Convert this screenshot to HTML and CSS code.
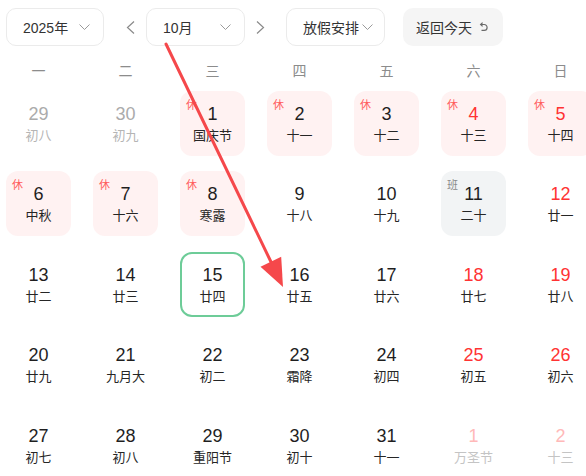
FILE: index.html
```html
<!DOCTYPE html>
<html lang="zh-CN">
<head>
<meta charset="utf-8">
<title>日历</title>
<link rel="stylesheet" href="styles.css">
</head>
<body>
<div class="page">
  <div class="toolbar">
    <div class="select sel-year"><span>2025年</span>
      <svg class="chev" width="11" height="6" viewBox="0 0 11 6"><polyline points="0.5,0.5 5.5,5.5 10.5,0.5"/></svg>
    </div>
    <button class="nav nav-prev" type="button">
      <svg width="9" height="13" viewBox="0 0 9 13"><polyline points="8,0.5 1.5,6.5 8,12.5"/></svg>
    </button>
    <div class="select sel-month"><span>10月</span>
      <svg class="chev" width="11" height="6" viewBox="0 0 11 6"><polyline points="0.5,0.5 5.5,5.5 10.5,0.5"/></svg>
    </div>
    <button class="nav nav-next" type="button">
      <svg width="9" height="13" viewBox="0 0 9 13"><polyline points="1,0.5 7.5,6.5 1,12.5"/></svg>
    </button>
    <div class="select sel-holiday"><span>放假安排</span>
      <svg class="chev" width="11" height="6" viewBox="0 0 11 6"><polyline points="0.5,0.5 5.5,5.5 10.5,0.5"/></svg>
    </div>
    <button class="today-btn" type="button"><span>返回今天</span>
      <svg class="undo" width="10" height="10" viewBox="0 0 10 10"><path d="M3 2.5 H6.2 A2.9 2.9 0 0 1 6.2 8.3 H3.5"/><polyline points="4.6,0.6 2.6,2.5 4.6,4.4"/></svg>
    </button>
  </div>

  <div class="grid">
    <div class="wd">一</div><div class="wd">二</div><div class="wd">三</div><div class="wd">四</div><div class="wd">五</div><div class="wd">六</div><div class="wd">日</div>

    <div class="cell other"><div class="num">29</div><div class="lunar">初八</div></div>
    <div class="cell other"><div class="num">30</div><div class="lunar">初九</div></div>
    <div class="cell rest"><span class="tag">休</span><div class="num">1</div><div class="lunar">国庆节</div></div>
    <div class="cell rest"><span class="tag">休</span><div class="num">2</div><div class="lunar">十一</div></div>
    <div class="cell rest"><span class="tag">休</span><div class="num">3</div><div class="lunar">十二</div></div>
    <div class="cell rest weekend"><span class="tag">休</span><div class="num">4</div><div class="lunar">十三</div></div>
    <div class="cell rest weekend"><span class="tag">休</span><div class="num">5</div><div class="lunar">十四</div></div>

    <div class="cell rest"><span class="tag">休</span><div class="num">6</div><div class="lunar">中秋</div></div>
    <div class="cell rest"><span class="tag">休</span><div class="num">7</div><div class="lunar">十六</div></div>
    <div class="cell rest"><span class="tag">休</span><div class="num">8</div><div class="lunar">寒露</div></div>
    <div class="cell"><div class="num">9</div><div class="lunar">十八</div></div>
    <div class="cell"><div class="num">10</div><div class="lunar">十九</div></div>
    <div class="cell work"><span class="tag">班</span><div class="num">11</div><div class="lunar">二十</div></div>
    <div class="cell weekend"><div class="num">12</div><div class="lunar">廿一</div></div>

    <div class="cell"><div class="num">13</div><div class="lunar">廿二</div></div>
    <div class="cell"><div class="num">14</div><div class="lunar">廿三</div></div>
    <div class="cell today"><div class="num">15</div><div class="lunar">廿四</div></div>
    <div class="cell"><div class="num">16</div><div class="lunar">廿五</div></div>
    <div class="cell"><div class="num">17</div><div class="lunar">廿六</div></div>
    <div class="cell weekend"><div class="num">18</div><div class="lunar">廿七</div></div>
    <div class="cell weekend"><div class="num">19</div><div class="lunar">廿八</div></div>

    <div class="cell"><div class="num">20</div><div class="lunar">廿九</div></div>
    <div class="cell"><div class="num">21</div><div class="lunar">九月大</div></div>
    <div class="cell"><div class="num">22</div><div class="lunar">初二</div></div>
    <div class="cell"><div class="num">23</div><div class="lunar">霜降</div></div>
    <div class="cell"><div class="num">24</div><div class="lunar">初四</div></div>
    <div class="cell weekend"><div class="num">25</div><div class="lunar">初五</div></div>
    <div class="cell weekend"><div class="num">26</div><div class="lunar">初六</div></div>

    <div class="cell"><div class="num">27</div><div class="lunar">初七</div></div>
    <div class="cell"><div class="num">28</div><div class="lunar">初八</div></div>
    <div class="cell"><div class="num">29</div><div class="lunar">重阳节</div></div>
    <div class="cell"><div class="num">30</div><div class="lunar">初十</div></div>
    <div class="cell"><div class="num">31</div><div class="lunar">十一</div></div>
    <div class="cell other weekend"><div class="num">1</div><div class="lunar">万圣节</div></div>
    <div class="cell other weekend"><div class="num">2</div><div class="lunar">十三</div></div>
  </div>

  <svg class="arrow" width="586" height="476" viewBox="0 0 586 476">
    <line x1="166" y1="44" x2="272" y2="264"/>
    <polygon points="283,287 260.5,266.8 281.2,256.8"/>
  </svg>
</div>
</body>
</html>
```
FILE: styles.css
```css
html, body {
  margin: 0;
  padding: 0;
  overflow: hidden;
  background: #ffffff;
}
body {
  font-family: "Liberation Sans", "Noto Sans CJK SC", Arial, sans-serif;
  color: #222;
}
.page {
  position: relative;
  width: 586px;
  height: 476px;
}
.toolbar {
  display: flex;
  align-items: center;
  padding: 8px 0 0 6px;
  height: 38px;
}
.select {
  box-sizing: border-box;
  height: 38px;
  width: 99px;
  border: 1px solid #ebebeb;
  border-radius: 10px;
  display: flex;
  align-items: center;
  justify-content: space-between;
  padding: 0 13px 0 16px;
  font-family: "Liberation Sans", "Noto Sans CJK SC", sans-serif;
  font-size: 14px;
  color: #333;
  background: #fff;
}
.sel-year { width: 98px; padding-right: 13px; }
.sel-month { margin-left: 6px; padding-right: 13px; }
.sel-holiday { margin-left: 16px; padding: 0 11px 0 16px; }
.sel-holiday span { font-family: "Noto Sans CJK SC", sans-serif; }
.chev polyline {
  fill: none;
  stroke: #9a9a9a;
  stroke-width: 1;
}
.nav {
  border: 0;
  background: none;
  padding: 0;
  width: 20px;
  height: 38px;
  display: flex;
  align-items: center;
  justify-content: center;
}
.nav-prev { margin-left: 16px; }
.nav-next { margin-left: 5px; }
.nav polyline {
  fill: none;
  stroke: #8a8a8a;
  stroke-width: 1.2;
}
.today-btn {
  box-sizing: border-box;
  margin-left: 18px;
  width: 100px;
  height: 38px;
  border: 0;
  border-radius: 10px;
  background: #f5f5f5;
  display: flex;
  align-items: center;
  padding: 0 0 0 13px;
  gap: 6px;
  font-family: "Noto Sans CJK SC", sans-serif;
  font-size: 14px;
  color: #333;
}
.undo path, .undo polyline {
  fill: none;
  stroke: #6a6a6a;
  stroke-width: 1.2;
}
.grid {
  display: grid;
  grid-template-columns: repeat(7, 65px);
  grid-template-rows: 17px repeat(5, 65px);
  column-gap: 22px;
  row-gap: 15.5px;
  padding: 12px 0 0 6px;
  width: 600px;
}
.wd {
  text-align: center;
  font-family: "Noto Sans CJK SC", sans-serif;
  font-size: 14px;
  line-height: 24px;
  height: 17px;
  color: #8c8c8c;
}
.cell {
  position: relative;
  box-sizing: border-box;
  border-radius: 12px;
  text-align: center;
  padding-top: 12px;
}
.num {
  font-size: 18px;
  line-height: 22px;
  color: #1f1f1f;
}
.lunar {
  font-family: "Noto Sans CJK SC", sans-serif;
  font-size: 13px;
  line-height: 20px;
  color: #262626;
}
.tag {
  position: absolute;
  left: 6px;
  top: 6px;
  font-family: "Noto Sans CJK SC", sans-serif;
  font-size: 11px;
  line-height: 14px;
}
.rest { background: #fff2f2; }
.rest .tag { color: #ff5c5c; }
.work { background: #f2f4f5; }
.work .tag { color: #8a8a8a; }
.weekend .num { color: #ff3333; }
.other .num { color: #ababab; }
.other .lunar { color: #b5b5b5; }
.other.weekend .num { color: #ffb9b9; }
.other.weekend .lunar { color: #c4c4c4; }
.today {
  border: 2px solid #6dcc98;
  padding-top: 10px;
}
.arrow {
  position: absolute;
  left: 0;
  top: 0;
  pointer-events: none;
}
.arrow line {
  stroke: #f5484b;
  stroke-width: 3;
  stroke-linecap: round;
}
.arrow polygon {
  fill: #f5484b;
}
```
